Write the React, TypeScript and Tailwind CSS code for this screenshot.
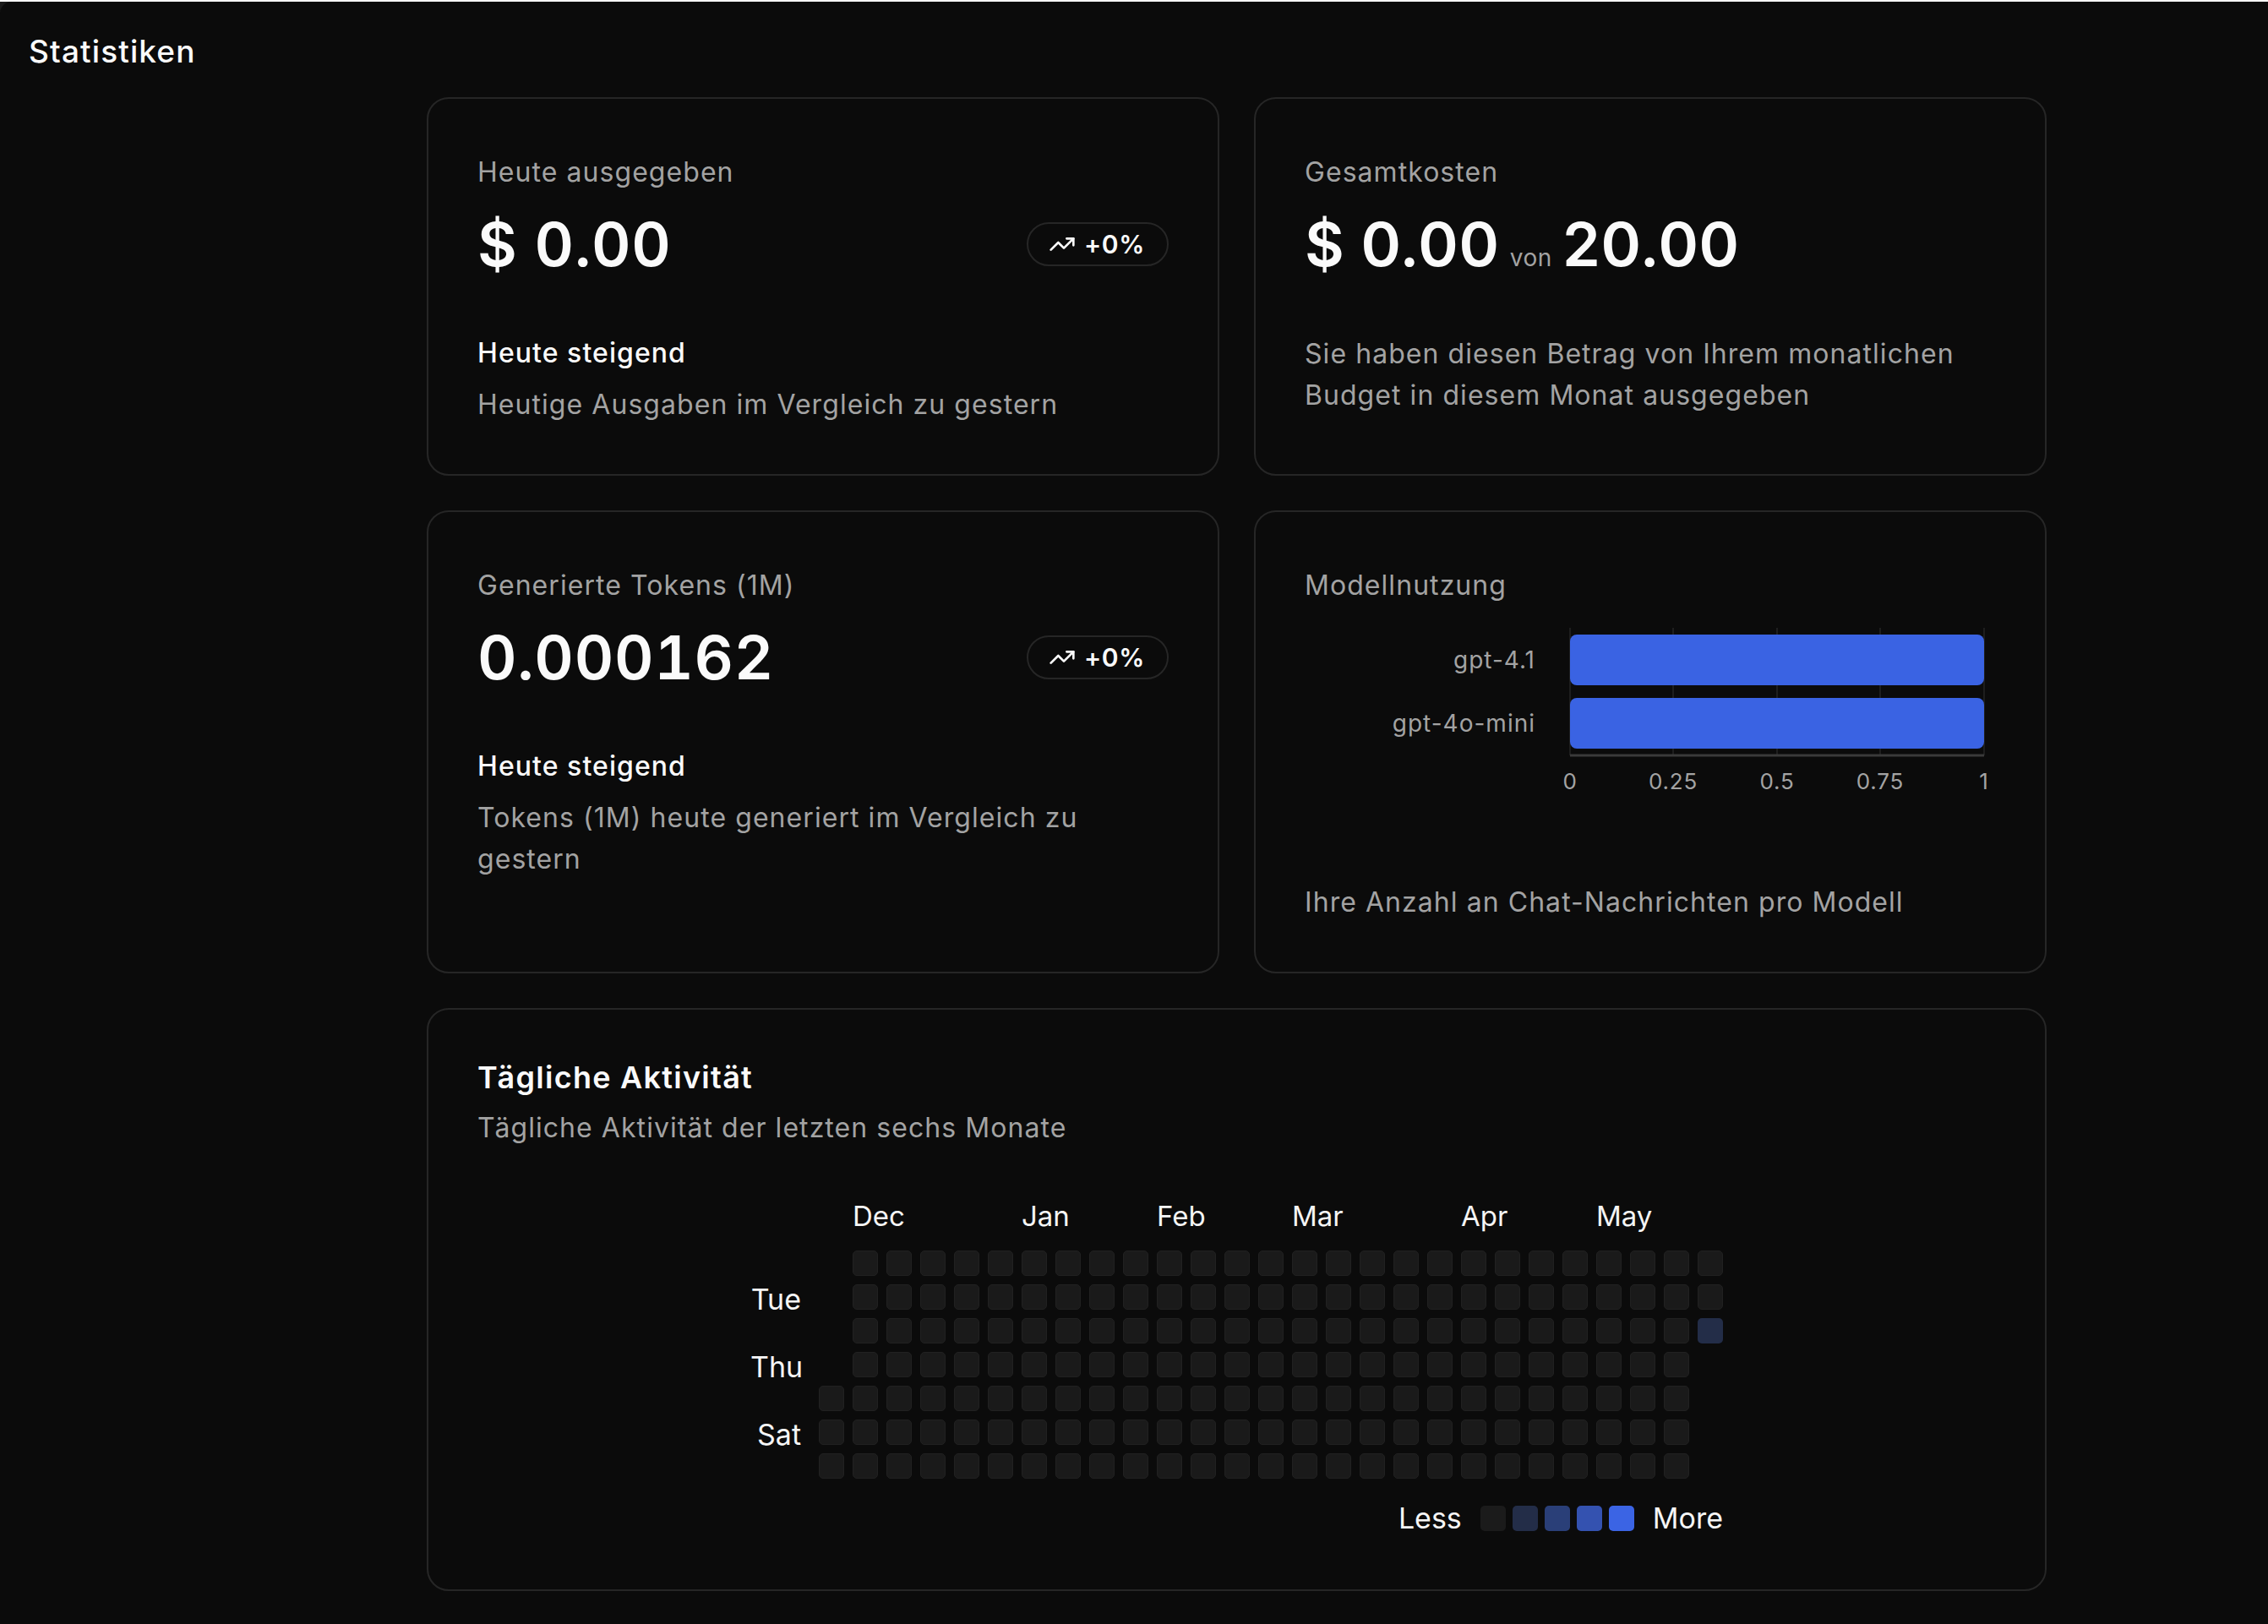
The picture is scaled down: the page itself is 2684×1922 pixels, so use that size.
import React from 'react'
import { TrendingUp } from 'lucide-react'

const MONTHS: Record<number, string> = { 1: 'Dec', 6: 'Jan', 10: 'Feb', 14: 'Mar', 19: 'Apr', 23: 'May' }
const DAYS = ['', 'Tue', '', 'Thu', '', 'Sat', '']
const LEVELS = ['bg-[#1b1b1b]', 'bg-[#232d48]', 'bg-[#2a3f78]', 'bg-[#3452b0]', 'bg-[#3b64e4]']

// 27 Wochen, erste Spalte beginnt am Freitag, letzte endet am Mittwoch
const weeks = Array.from({ length: 27 }, (_, w) =>
  Array.from({ length: 7 }, (_, d) => {
    if (w === 0 && d < 4) return -1
    if (w === 26 && d > 2) return -1
    if (w === 26 && d === 2) return 1
    return 0
  })
)

function Card({ children, className = '' }: { children: React.ReactNode; className?: string }) {
  return (
    <div className={`rounded-[26px] border-2 border-[#262626] bg-[#0b0b0b] px-[58px] pt-[63px] ${className}`}>
      {children}
    </div>
  )
}

function Badge() {
  return (
    <div className="flex h-[52px] items-center gap-[10px] rounded-full border-2 border-[#262626] pl-[24px] pr-[26px] text-[30px] font-semibold tracking-[0.02em] text-[#fafafa]">
      <TrendingUp size={32} strokeWidth={2} />
      <span>+0%</span>
    </div>
  )
}

function StatCard({ label, value, desc }: { label: string; value: string; desc: string }) {
  return (
    <Card className="pb-[58px]">
      <div className="text-[32px] leading-[48px] tracking-[0.033em] text-[#a3a3a3]">{label}</div>
      <div className="mt-[21px] flex items-center justify-between">
        <div className="text-[72px] leading-[80px] font-semibold tracking-[0.01em] tabular-nums text-[#fafafa]">{value}</div>
        <Badge />
      </div>
      <div className="mt-[65px]">
        <div className="text-[32px] leading-[48px] font-medium tracking-[0.033em] text-[#fafafa]">Heute steigend</div>
        <div className="mt-[12px] text-[32px] leading-[49px] tracking-[0.033em] text-[#a3a3a3]">{desc}</div>
      </div>
    </Card>
  )
}

function ModelChart() {
  const ticks = [
    { x: 314, l: '0' },
    { x: 436, l: '0.25' },
    { x: 559, l: '0.5' },
    { x: 681, l: '0.75' },
    { x: 804, l: '1' },
  ]
  const bars = [
    { y: 34, l: 'gpt-4.1' },
    { y: 109, l: 'gpt-4o-mini' },
  ]
  return (
    <svg width="818" height="326" className="block overflow-visible" style={{ fontFamily: 'Inter, sans-serif' }}>
      {ticks.map((t) => (
        <line key={t.l} x1={t.x} x2={t.x} y1={26} y2={177} stroke="#1e1e1e" strokeWidth={2} />
      ))}
      {bars.map((b) => (
        <g key={b.l}>
          <rect x={314} y={b.y} width={490} height={60} rx={8} fill="#3a63e3" />
          <text
            x={273}
            y={b.y + 30}
            textAnchor="end"
            dominantBaseline="central"
            fontSize={28}
            letterSpacing={1}
            fill="#a3a3a3"
          >
            {b.l}
          </text>
        </g>
      ))}
      <line x1={314} x2={804} y1={177} y2={177} stroke="#3a3a3a" strokeWidth={3} />
      {ticks.map((t) => (
        <text key={t.l} x={t.x} y={217} textAnchor="middle" fontSize={26} letterSpacing={0.8} fill="#a3a3a3">
          {t.l}
        </text>
      ))}
    </svg>
  )
}

function Heatmap() {
  return (
    <div className="mt-[61px] flex justify-center">
      <div className="flex gap-[21px]">
        <div className="flex w-[60px] flex-col gap-[10px] pt-[63px]">
          {DAYS.map((d, i) => (
            <div key={i} className="h-[30px] text-right text-[34px] leading-[30px] text-[#f5f5f5]">
              {d}
            </div>
          ))}
        </div>
        <div className="flex flex-col">
          <div className="flex h-[40px] gap-[10px]">
            {weeks.map((_, w) => (
              <div key={w} className="w-[30px] whitespace-nowrap text-[33px] leading-[38px] text-[#f5f5f5]">
                {MONTHS[w] ?? ''}
              </div>
            ))}
          </div>
          <div className="mt-[20px] flex gap-[10px]">
            {weeks.map((week, w) => (
              <div key={w} className="flex flex-col gap-[10px]">
                {week.map((lvl, d) => (
                  <div
                    key={d}
                    className={`h-[30px] w-[30px] rounded-[5px] ${
                      lvl < 0
                        ? 'invisible'
                        : lvl === 1
                        ? 'bg-[#232d48]'
                        : 'border border-[#212121] bg-[#1a1a1a]'
                    }`}
                  />
                ))}
              </div>
            ))}
          </div>
          <div className="mt-[26px] flex items-center justify-end text-[34px] leading-[41px] text-[#f5f5f5]">
            <span>Less</span>
            <div className="ml-[22px] mr-[22px] flex gap-[8px]">
              {LEVELS.map((c) => (
                <div key={c} className={`h-[30px] w-[30px] rounded-[5px] ${c}`} />
              ))}
            </div>
            <span>More</span>
          </div>
        </div>
      </div>
    </div>
  )
}

export default function App() {
  return (
    <div className="min-h-screen bg-[#1a1a1a] [font-family:Inter,'Noto_Sans',sans-serif]">
      <div className="mt-[2px] min-h-[1920px] rounded-tl-[14px] bg-[#0b0b0b] pb-[37px]">
        <h1 className="pl-[34px] pt-[35px] text-[37px] leading-[48px] font-medium tracking-[0.03em] text-[#fafafa]">
          Statistiken
        </h1>

        <div className="mt-[30px] pl-[505px]">
          <div className="grid w-[1917px] grid-cols-2 gap-[41px]">
            <StatCard
              label="Heute ausgegeben"
              value="$ 0.00"
              desc="Heutige Ausgaben im Vergleich zu gestern"
            />

            <Card className="pb-[58px]">
              <div className="text-[32px] leading-[48px] tracking-[0.033em] text-[#a3a3a3]">Gesamtkosten</div>
              <div className="mt-[21px] flex items-baseline gap-[12px] text-[#fafafa]">
                <span className="text-[72px] leading-[80px] font-semibold tracking-[0.01em]">$ 0.00</span>
                <span className="text-[28px] tracking-[0.02em] text-[#a3a3a3]">von</span>
                <span className="text-[72px] leading-[80px] font-semibold tracking-[0.01em]">20.00</span>
              </div>
              <div className="mt-[65px] text-[32px] leading-[49px] tracking-[0.033em] text-[#a3a3a3]">
                Sie haben diesen Betrag von Ihrem monatlichen Budget in diesem Monat ausgegeben
              </div>
            </Card>

            <StatCard
              label="Generierte Tokens (1M)"
              value="0.000162"
              desc="Tokens (1M) heute generiert im Vergleich zu gestern"
            />

            <Card className="pb-[58px]">
              <div className="text-[32px] leading-[48px] tracking-[0.033em] text-[#a3a3a3]">Modellnutzung</div>
              <ModelChart />
              <div className="text-[32px] leading-[49px] tracking-[0.033em] text-[#a3a3a3]">
                Ihre Anzahl an Chat-Nachrichten pro Modell
              </div>
            </Card>

            <Card className="col-span-2 !pt-[56px] pb-[64px]">
              <div className="text-[36px] leading-[48px] font-semibold tracking-[0.035em] text-[#fafafa]">
                Tägliche Aktivität
              </div>
              <div className="mt-[12px] text-[32px] leading-[48px] tracking-[0.033em] text-[#a3a3a3]">
                Tägliche Aktivität der letzten sechs Monate
              </div>
              <Heatmap />
            </Card>
          </div>
        </div>
      </div>
    </div>
  )
}
